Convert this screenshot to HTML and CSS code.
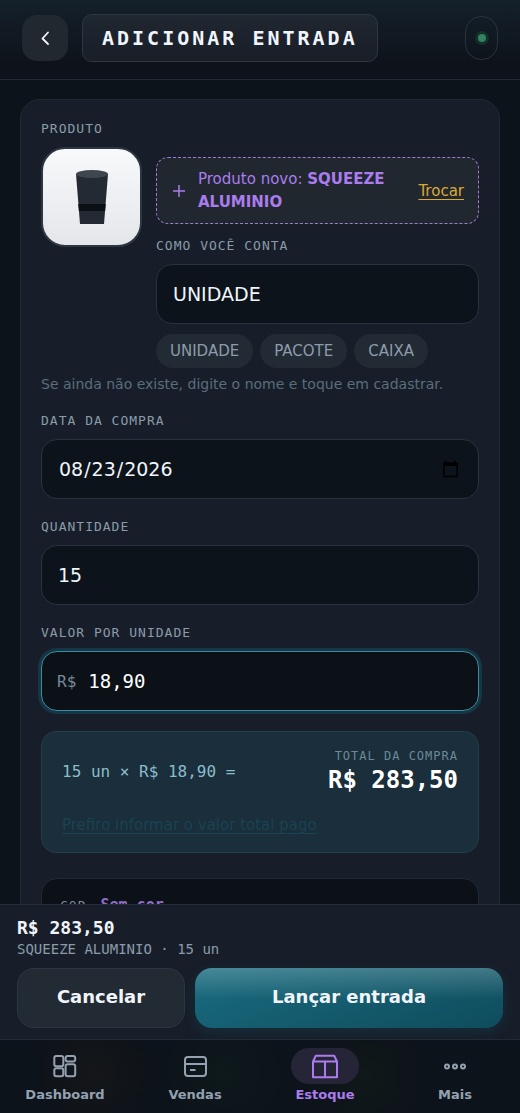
FILE: index.html
```html
<!DOCTYPE html>
<html lang="pt-BR">
<head>
<meta charset="utf-8">
<meta name="viewport" content="width=device-width, initial-scale=1">
<title>Adicionar entrada</title>
<link rel="stylesheet" href="styles.css">
</head>
<body>
<div class="app">
  <header class="topbar">
    <button class="back" type="button" aria-label="Voltar">
      <svg width="20" height="20" viewBox="0 0 20 20" fill="none" stroke="currentColor" stroke-width="1.800" stroke-linecap="round" stroke-linejoin="round"><path d="M13 4.500 7.500 10.500l5.500 5.500"/></svg>
    </button>
    <h1 class="title">ADICIONAR ENTRADA</h1>
    <span class="status" role="img" aria-label="Conectado"><span class="status-dot"></span></span>
  </header>

  <main class="content">
    <form class="card" id="entrada">
      <section class="product">
        <p class="label">PRODUTO</p>
        <div class="product-row">
          <div class="thumb">
            <svg width="34" height="56" viewBox="0 0 34 56">
              <path d="M1 5h32l-4 50H5z" fill="#232a34"/>
              <path d="M3.300 35h27.400l-.6 7H3.900z" fill="#0b0f16"/>
              <ellipse cx="17" cy="5" rx="16" ry="4" fill="#3f464f"/>
            </svg>
          </div>
          <div class="product-fields">
            <div class="new-product">
              <svg class="plus" width="14" height="14" viewBox="0 0 14 14" fill="none" stroke="currentColor" stroke-width="1.500"><path d="M7 1v12M1 7h12"/></svg>
              <p class="new-product-text">Produto novo: <strong>SQUEEZE ALUMINIO</strong></p>
              <button class="swap" type="button">Trocar</button>
            </div>
            <div class="field">
              <label class="label" for="unidade">COMO VOCÊ CONTA</label>
              <input class="input" id="unidade" type="text" value="UNIDADE">
            </div>
            <div class="chips">
              <button class="chip" type="button">UNIDADE</button>
              <button class="chip" type="button">PACOTE</button>
              <button class="chip" type="button">CAIXA</button>
            </div>
          </div>
        </div>
        <p class="hint">Se ainda não existe, digite o nome e toque em cadastrar.</p>
      </section>

      <div class="field">
        <label class="label" for="data">DATA DA COMPRA</label>
        <input class="input" id="data" type="date" value="2026-08-23">
      </div>
      <div class="field">
        <label class="label" for="quantidade">QUANTIDADE</label>
        <input class="input" id="quantidade" type="text" inputmode="numeric" value="15">
      </div>
      <div class="field">
        <label class="label" for="valor">VALOR POR UNIDADE</label>
        <div class="input money active">
          <span class="prefix">R$</span>
          <input class="money-input" id="valor" type="text" inputmode="decimal" value="18,90">
        </div>
      </div>

      <section class="total">
        <div class="total-row">
          <p class="formula">15 un × R$ 18,90 =</p>
          <div class="total-side">
            <p class="total-label">TOTAL DA COMPRA</p>
            <p class="total-value">R$ 283,50</p>
          </div>
        </div>
        <button class="total-link" type="button">Prefiro informar o valor total pago</button>
      </section>

      <section class="color-card">
        <span class="color-label">COR</span>
        <strong class="color-value">Sem cor</strong>
      </section>
    </form>
  </main>

  <section class="actions">
    <p class="sum">R$ 283,50</p>
    <p class="summary">SQUEEZE ALUMINIO · 15 un</p>
    <div class="buttons">
      <button class="btn" type="button">Cancelar</button>
      <button class="btn primary" type="submit" form="entrada">Lançar entrada</button>
    </div>
  </section>

  <nav class="tabs">
    <a class="tab" href="#dashboard">
      <span class="tab-icon"><svg width="26" height="26" viewBox="0 0 26 26" fill="none" stroke="currentColor" stroke-width="2"><rect x="2.300" y="2.900" width="9" height="10.300" rx="2"/><rect x="13.600" y="2.900" width="9.600" height="5.600" rx="2"/><rect x="2.300" y="15.200" width="9" height="8" rx="2"/><rect x="13.600" y="11.300" width="9.600" height="11.900" rx="2"/></svg></span>
      Dashboard
    </a>
    <a class="tab" href="#vendas">
      <span class="tab-icon"><svg width="26" height="26" viewBox="0 0 26 26" fill="none" stroke="currentColor" stroke-width="2"><rect x="3" y="4" width="21" height="19" rx="3"/><path d="M3 11h21M8 17h5.500"/></svg></span>
      Vendas
    </a>
    <a class="tab current" href="#estoque" aria-current="page">
      <span class="tab-icon"><svg width="28" height="26" viewBox="0 0 28 26" fill="none" stroke="currentColor" stroke-width="2" stroke-linejoin="round"><path d="M2 8.500h24V24.300H2zM2 8.500 4.800 2.800h18.400L26 8.500M14 8.500v15.800"/></svg></span>
      Estoque
    </a>
    <a class="tab" href="#mais">
      <span class="tab-icon"><svg width="26" height="26" viewBox="0 0 26 26" fill="none" stroke="currentColor" stroke-width="2"><circle cx="5" cy="13.500" r="2"/><circle cx="13" cy="13.500" r="2"/><circle cx="21" cy="13.500" r="2"/></svg></span>
      Mais
    </a>
  </nav>
</div>
</body>
</html>
```

FILE: styles.css
```css
:root {
  --sans: "DejaVu Sans", sans-serif;
  --mono: "DejaVu Sans Mono", monospace;
  --surface: #171e29;
  --field: #0c131a;
  --line: #27333f;
  --muted: #8b9baa;
  --text: #f1f5fb;
  --purple: #ab7cee;
}

* {
  box-sizing: border-box;
}

body {
  margin: 0;
  background: #0c131b;
  color: var(--text);
  font-family: var(--sans);
}

p,
h1 {
  margin: 0;
}

button,
input {
  margin: 0;
  color: inherit;
  font-family: inherit;
}

.app {
  display: flex;
  flex-direction: column;
  height: 100vh;
}

/* Top bar */
.topbar {
  display: flex;
  flex: none;
  align-items: center;
  gap: 14px;
  padding: 14px 22px 17px;
  border-bottom: 1px solid #202b38;
  background: linear-gradient(#14202a, #0e131b 80%);
}

.back {
  display: grid;
  place-items: center;
  width: 46px;
  height: 46px;
  padding: 0;
  border: 0;
  border-radius: 15px;
  background: #21282f;
}

.title {
  padding: 0 19px;
  border: 1px solid #2c3742;
  border-radius: 10px;
  background: linear-gradient(#1f2731, #191e27);
  font: bold 20px/46px var(--mono);
  letter-spacing: 3px;
  white-space: nowrap;
}

.status {
  display: grid;
  place-items: center;
  width: 33px;
  height: 44px;
  margin-left: auto;
  border: 1px solid #27343e;
  border-radius: 16px;
}

.status-dot {
  width: 8px;
  height: 8px;
  border-radius: 50%;
  background: #34805f;
  box-shadow: 0 0 0 3px #12302a;
}

/* Form */
.content {
  flex: 1;
  min-height: 0;
  padding: 19px 20px 0;
  overflow: hidden;
}

.card {
  display: flex;
  flex-direction: column;
  gap: 20px;
  padding: 21px 20px 20px;
  border: 1px solid #202a35;
  border-radius: 20px;
  background: var(--surface);
}

.label {
  color: var(--muted);
  font: 13px/16px var(--mono);
  letter-spacing: 1px;
}

.field {
  display: flex;
  flex-direction: column;
  gap: 10px;
}

.input {
  width: 100%;
  height: 60px;
  padding: 0 16px;
  border: 1px solid var(--line);
  border-radius: 16px;
  outline: 0;
  background: var(--field);
  font-size: 19px;
}

.product-row {
  display: grid;
  grid-template-columns: 101px 1fr;
  gap: 14px;
  margin-top: 10px;
}

.thumb {
  display: grid;
  place-items: center;
  height: 100px;
  border: 2px solid #2c3742;
  border-radius: 24px;
  background: linear-gradient(#f8f9fb, #e4e6ea);
}

.product-fields {
  display: flex;
  flex-direction: column;
  padding-top: 10px;
}

.new-product {
  display: flex;
  align-items: center;
  gap: 12px;
  margin-bottom: 14px;
  padding: 10px 14px 10px 15px;
  border: 1px dashed #9d7bd0;
  border-radius: 12px;
  background: #20272f;
  color: var(--purple);
  font-size: 15px;
  line-height: 1.5;
}

.plus {
  flex: none;
}

.new-product-text {
  flex: 1;
}

.swap {
  padding: 0;
  border: 0;
  background: none;
  color: #dba936;
  font-size: 15px;
  text-decoration: underline;
  text-decoration-skip-ink: none;
  text-underline-offset: 3px;
}

.chips {
  display: flex;
  flex-wrap: wrap;
  gap: 7px;
  margin-top: 10px;
}

.chip {
  height: 34px;
  padding: 0 14px;
  border: 0;
  border-radius: 17px;
  background: #222a33;
  color: #8d9bac;
  font-size: 15px;
}

.hint {
  margin-top: 7px;
  color: #5a6d7c;
  font-size: 14px;
  line-height: 18px;
}

.money {
  display: flex;
  align-items: center;
  gap: 12px;
  padding: 0 15px;
}

.money.active {
  border-color: #3a8d9f;
  background: #0b1117;
  box-shadow: 0 0 0 3px #163545;
}

.prefix {
  color: #77889a;
  font: 16px var(--mono);
}

.money-input {
  flex: 1;
  min-width: 0;
  padding: 0;
  border: 0;
  outline: 0;
  background: none;
  color: #ffffff;
  font: 19px var(--mono);
}

/* Purchase total */
.total {
  padding: 16px 20px;
  border: 1px solid #233e49;
  border-radius: 15px;
  background: #1a2e3b;
}

.total-row {
  display: flex;
  align-items: center;
  justify-content: space-between;
}

.formula {
  color: #8bbccb;
  font: 16px/20px var(--mono);
}

.total-side {
  text-align: right;
}

.total-label {
  color: #6b8a98;
  font: 12px/16px var(--mono);
  letter-spacing: 1px;
}

.total-value {
  color: #ffffff;
  font: bold 24px/32px var(--mono);
}

.total-link {
  display: block;
  margin-top: 18px;
  padding: 0;
  border: 0;
  background: none;
  color: #184352;
  font-size: 15px;
  line-height: 22px;
  text-decoration: underline;
  text-decoration-skip-ink: none;
  text-underline-offset: 3px;
}

.color-card {
  display: flex;
  align-items: baseline;
  gap: 14px;
  height: 120px;
  margin-top: 5px;
  padding: 16px 18px;
  border: 1px solid #202a35;
  border-radius: 16px;
  background: #0c1118;
  line-height: 20px;
}

.color-label {
  color: #7b8997;
  font: 13px/20px var(--mono);
  letter-spacing: 1px;
}

.color-value {
  color: #8f6bc7;
  font: bold 15px/20px var(--mono);
}

/* Action bar */
.actions {
  flex: none;
  padding: 11px 17px;
  border-top: 1px solid #232e39;
  background: var(--surface);
}

.sum {
  font: bold 18px/24px var(--mono);
}

.summary {
  color: var(--muted);
  font: 14px/18px var(--mono);
}

.buttons {
  display: grid;
  grid-template-columns: 6fr 11fr;
  gap: 10px;
  margin-top: 10px;
}

.btn {
  height: 60px;
  padding: 0 0 3px;
  border: 1px solid #2b3742;
  border-radius: 17px;
  background: #222a33;
  font-size: 18px;
  font-weight: bold;
}

.btn.primary {
  border: 0;
  background:
    linear-gradient(rgba(255, 255, 255, 0.2), rgba(255, 255, 255, 0) 52%),
    linear-gradient(160deg, #196c80, #0f4c5c);
  box-shadow: 0 4px 12px rgba(20, 90, 110, 0.25);
}

/* Bottom navigation */
.tabs {
  display: grid;
  flex: none;
  grid-template-columns: repeat(4, 1fr);
  padding: 8px 0 9px;
  border-top: 1px solid #202c36;
  background:
    radial-gradient(circle at 18% 45%, rgba(50, 35, 20, 0.2), transparent 60px),
    radial-gradient(circle at 43% 45%, rgba(15, 50, 35, 0.2), transparent 60px),
    radial-gradient(circle at 70% 50%, rgba(30, 45, 20, 0.2), transparent 60px),
    #0d131a;
}

.tab {
  display: flex;
  flex-direction: column;
  align-items: center;
  gap: 2px;
  color: #93a1b1;
  font-size: 13px;
  font-weight: bold;
  line-height: 18px;
  text-decoration: none;
}

.tab-icon {
  display: grid;
  place-items: center;
  width: 68px;
  height: 36px;
  border-radius: 18px;
}

.tab.current {
  color: var(--purple);
}

.tab.current .tab-icon {
  background: #262437;
}
```
